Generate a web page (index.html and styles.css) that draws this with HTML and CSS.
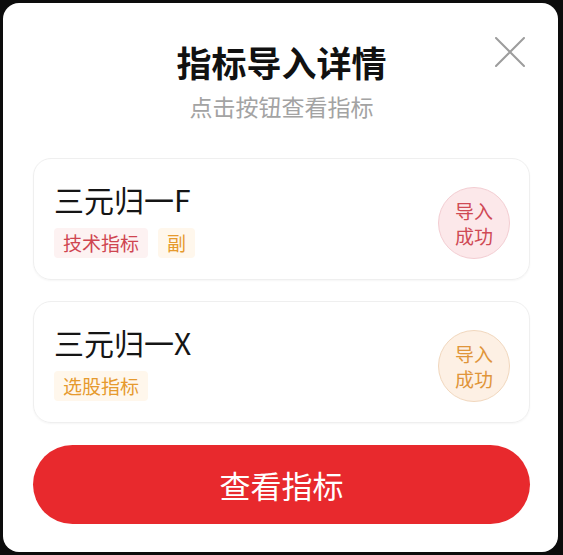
FILE: index.html
```html
<!DOCTYPE html>
<html lang="zh-CN">
<head>
<meta charset="utf-8">
<title>指标导入详情</title>
<link rel="stylesheet" href="styles.css">
</head>
<body>
<div class="dialog">
  <button class="close" aria-label="关闭">
    <svg width="30" height="30" viewBox="0 0 30 30"><path d="M1 1 L29 29 M29 1 L1 29" stroke="#9d9d9d" stroke-width="2" fill="none" stroke-linecap="round"/></svg>
  </button>
  <div class="title">指标导入详情</div>
  <div class="subtitle">点击按钮查看指标</div>
  <div class="list">
    <div class="card">
      <div class="info">
        <div class="name">三元归一F</div>
        <div class="tags">
          <span class="tag tag-red">技术指标</span>
          <span class="tag tag-orange">副</span>
        </div>
      </div>
      <div class="badge badge-red">导入<br>成功</div>
    </div>
    <div class="card">
      <div class="info">
        <div class="name">三元归一X</div>
        <div class="tags">
          <span class="tag tag-orange">选股指标</span>
        </div>
      </div>
      <div class="badge badge-orange">导入<br>成功</div>
    </div>
  </div>
  <button class="primary">查看指标</button>
</div>
</body>
</html>
```
FILE: styles.css
```css
* { box-sizing: border-box; }
html, body { margin: 0; padding: 0; }
body {
  background: #0c0c0c;
  width: 563px;
  height: 555px;
  padding: 3px 5px 3px 3px;
  font-family: "Noto Sans CJK SC", "Noto Sans", sans-serif;
}
.dialog {
  position: relative;
  width: 555px;
  height: 549px;
  background: #fff;
  border-radius: 16px;
  padding: 38px 28px 0 30px;
  display: flex;
  flex-direction: column;
  align-items: stretch;
}
.close {
  position: absolute;
  top: 34px;
  right: 33px;
  width: 30px;
  height: 30px;
  padding: 0;
  border: 0;
  background: transparent;
  display: flex;
}
.title {
  text-align: center;
  font-size: 35px;
  line-height: 42px;
  font-weight: 700;
  color: #111;
}
.subtitle {
  margin-top: 8px;
  text-align: center;
  font-size: 23px;
  line-height: 30px;
  color: #a3a3a3;
}
.list {
  margin-top: 37px;
  display: flex;
  flex-direction: column;
  gap: 21px;
}
.card {
  height: 122px;
  border: 1px solid #efefef;
  border-radius: 18px;
  padding: 0 19px 0 20px;
  display: flex;
  align-items: center;
  justify-content: space-between;
  box-shadow: 0 1px 2px rgba(0,0,0,0.04);
}
.info {
  display: flex;
  flex-direction: column;
  gap: 11px;
}
.name {
  font-size: 30px;
  line-height: 36px;
  color: #151515;
}
.tags {
  display: flex;
  gap: 10px;
}
.tag {
  height: 30px;
  line-height: 30px;
  padding: 0 9px;
  font-size: 19px;
  border-radius: 4px;
}
.tag-red { background: #fdf2f2; color: #cf4550; }
.tag-orange { background: #fff7ec; color: #e69a2e; }
.badge {
  width: 72px;
  height: 72px;
  border-radius: 50%;
  margin-top: 8px;
  display: flex;
  align-items: center;
  justify-content: center;
  text-align: center;
  font-size: 19px;
  line-height: 25px;
}
.badge-red { background: #fce8ea; border: 1px solid #f3cdd2; color: #cf4a55; }
.badge-orange { background: #fdf0e4; border: 1px solid #f1d7bd; color: #e0953a; }
.primary {
  margin-top: 22px;
  height: 79px;
  border: 0;
  border-radius: 40px;
  background: #e8292d;
  color: #fff;
  font-family: inherit;
  font-size: 31px;
}
```
